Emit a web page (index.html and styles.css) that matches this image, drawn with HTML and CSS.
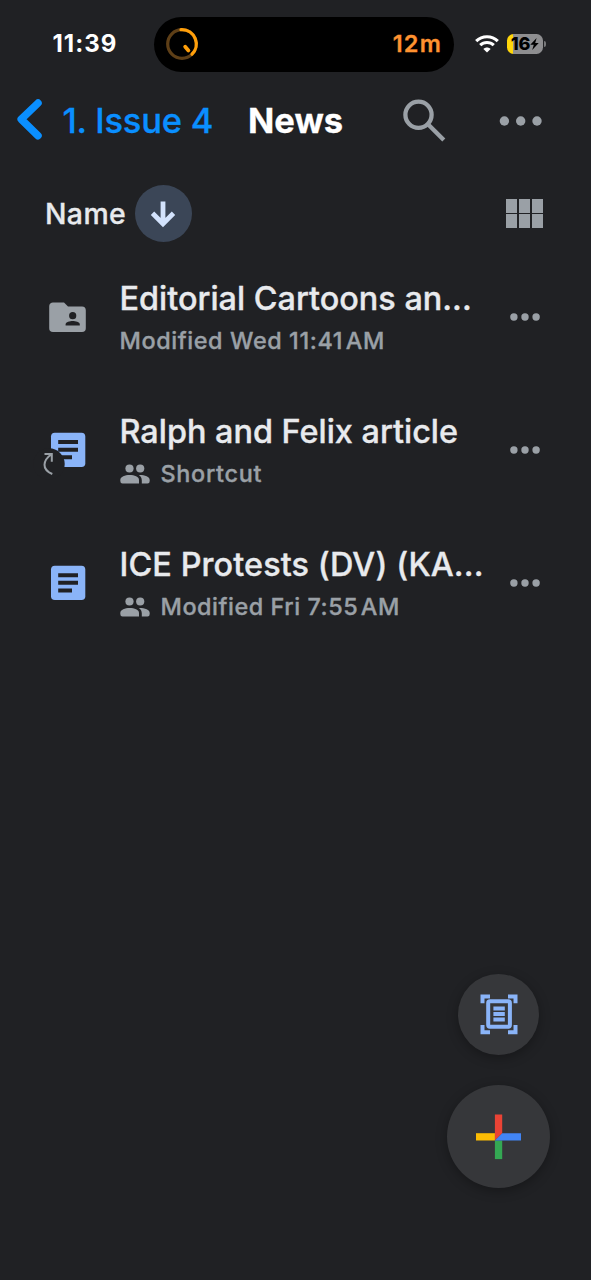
FILE: index.html
```html
<!DOCTYPE html>
<html lang="en">
<head>
<meta charset="utf-8">
<title>News</title>
<link rel="stylesheet" href="styles.css">
</head>
<body>
<svg width="0" height="0" class="defs">
  <symbol id="people" viewBox="0 0 30 20">
    <circle cx="9.5" cy="4.5" r="4.1"/><circle cx="20.2" cy="4.5" r="4.1"/>
    <path d="M0.300 16C0.300 12.500 5 11 9.700 11S19 12.500 19 16V19.500H2.500Q0.300 19.500 0.300 17Z"/>
    <path d="M19.500 11C25 11 29.700 12.500 29.700 16V17Q29.700 19.500 27.500 19.500H21.800V16.500C21.800 14 20.700 12.200 18.800 11Z"/>
  </symbol>
  <symbol id="more" viewBox="0 0 30 8">
    <circle cx="3.900" cy="4" r="3.700"/><circle cx="15" cy="4" r="3.700"/><circle cx="26.100" cy="4" r="3.700"/>
  </symbol>
</svg>
<div class="screen">
  <header class="status">
    <span class="clock">11:39</span>
    <div class="island">
      <svg class="timer" width="32" height="32" viewBox="0 0 32 32" fill="none" stroke-width="3.200">
        <circle cx="16" cy="16" r="14.300" stroke="#5e3f17"/>
        <path d="M15 1.700H16A14.300 14.300 0 0 1 26 26.200" stroke="#ff9f0a" stroke-linecap="round"/>
        <path d="M19.200 18.700L22.400 22.400" stroke="#ff9f0a" stroke-width="3.800" stroke-linecap="round"/>
      </svg>
      <span class="remaining">12m</span>
    </div>
    <svg class="wifi" width="24" height="18" viewBox="0 0 24 18" fill="none" stroke="#fff" stroke-width="3.100">
      <path d="M1.200 6.200C7.200 0.300 16.800 0.300 22.800 6.200"/>
      <path d="M5.200 10.200C9 6.500 15 6.500 18.800 10.200"/>
      <path d="M12 17.600L8.400 14C10.300 12 13.700 12 15.600 14Z" fill="#fff" stroke="none"/>
    </svg>
    <div class="battery"><span class="level">16</span><svg width="9" height="12" viewBox="0 0 9 12"><path d="M6.600 0L0.300 6.800H3.800L2.200 12L8.700 4.900H5.200Z"/></svg></div>
    <i class="cap"></i>
  </header>

  <nav class="nav">
    <svg class="chevron" width="26" height="42" viewBox="0 0 26 42" fill="none" stroke="#0a8fff" stroke-width="7.500" stroke-linecap="round" stroke-linejoin="round"><path d="M21 4.100L4.200 20.200L21 36.700"/></svg>
    <span class="back">1. Issue 4</span>
    <h1 class="heading">News</h1>
    <svg class="search" width="43" height="43" viewBox="0 0 43 43" fill="none" stroke="#9aa0a6" stroke-width="4.300"><circle cx="15.500" cy="15.800" r="13.100"/><path d="M25 25.300L40.800 41"/></svg>
    <svg class="menu" width="44" height="10" viewBox="0 0 44 10" fill="#9aa0a6"><circle cx="5.400" cy="5" r="4.700"/><circle cx="21.700" cy="5" r="4.700"/><circle cx="38" cy="5" r="4.700"/></svg>
  </nav>

  <div class="sort">
    <span class="sort-name">Name</span>
    <span class="sort-dir"><svg width="26" height="28" viewBox="0 0 26 28" fill="none" stroke="#d3e3fd" stroke-width="4.800"><path d="M13 1.500V23.500M2.500 13.300L13 23.800L23.500 13.300"/></svg></span>
    <div class="grid"><i></i><i></i><i></i><i></i><i></i><i></i></div>
  </div>

  <main>
    <article class="row">
      <svg class="file" width="44" height="44" viewBox="0 0 44 44"><path d="M9.200 7.500H20L24 11.500H38A3.800 3.800 0 0 1 41.800 15.300V33.200A3.800 3.800 0 0 1 38 37H9A3.800 3.800 0 0 1 5.200 33.200V11.500A3.800 3.800 0 0 1 9.200 7.500Z" fill="#9aa0a6"/><circle cx="28.700" cy="20.700" r="3.600" fill="#202124"/><path d="M21.600 30.500V29.500C21.600 27 26 26.100 28.700 26.100S35.800 27 35.800 29.500V30.500Z" fill="#202124"/></svg>
      <div class="text">
        <div class="title t1">Editorial Cartoons an...</div>
        <div class="sub s1">Modified Wed 11:41&#8202;AM</div>
      </div>
      <svg class="more"><use href="#more"/></svg>
    </article>
    <article class="row">
      <svg class="file" width="44" height="44" viewBox="0 0 44 44"><rect x="7" y="4.700" width="34.300" height="34.300" rx="3.800" fill="#8ab4f8"/><path d="M14.200 14H34M14.200 21.700H34M14.200 29.300H28" stroke="#202124" stroke-width="4"/><circle cx="5" cy="36" r="15.700" fill="#202124"/><path d="M0.500 26H7.800V33.800M7.800 26C-1.500 32.500-2.500 41.500 8.300 46" fill="none" stroke="#9aa0a6" stroke-width="2"/></svg>
      <div class="text">
        <div class="title t2">Ralph and Felix article</div>
        <div class="sub s2"><svg class="people"><use href="#people"/></svg>Shortcut</div>
      </div>
      <svg class="more"><use href="#more"/></svg>
    </article>
    <article class="row">
      <svg class="file" width="44" height="44" viewBox="0 0 44 44"><rect x="7" y="4.700" width="34.300" height="34.300" rx="3.800" fill="#8ab4f8"/><path d="M14.200 14.200H34M14.200 21.800H34M14.200 29.400H28" stroke="#202124" stroke-width="4"/></svg>
      <div class="text">
        <div class="title t3">ICE Protests (DV) (KA...</div>
        <div class="sub s3"><svg class="people"><use href="#people"/></svg>Modified Fri 7:55&#8202;AM</div>
      </div>
      <svg class="more"><use href="#more"/></svg>
    </article>
  </main>

  <div class="fabs">
    <div class="fab scan">
      <svg width="38" height="42" viewBox="0 0 38 42" fill="none" stroke="#8ab4f8"><path d="M2.500 9.200V2.400H10M28 2.400H35.500V9.200M2.500 31V38.200H10M28 38.200H35.500V31" stroke-width="4"/><rect x="8.200" y="7.300" width="21.700" height="25.500" rx="1.700" stroke-width="4"/><path d="M13.400 14.500H24.800M13.400 20H24.800M13.400 25.500H24.800" stroke-width="4"/></svg>
    </div>
    <div class="fab add">
      <svg width="45" height="45" viewBox="0 0 45 45"><path d="M18.900 0.500H26.200V19.200L18.900 26.500Z" fill="#ea4335"/><path d="M0 19.200H18.900V26.500H0Z" fill="#fbbc04"/><path d="M18.900 26.500H26.200V45.100H18.900Z" fill="#34a853"/><path d="M26.200 19.200H45V26.500H18.900Z" fill="#4285f4"/></svg>
    </div>
  </div>
</div>
</body>
</html>
```

FILE: styles.css
```css
* { box-sizing: border-box; }
body { margin: 0; background: #202124; font-family: Inter, "Liberation Sans", sans-serif; }
svg { display: block; flex: none; overflow: visible; }
.defs { position: absolute; }
.screen { position: relative; width: 591px; height: 1280px; overflow: hidden; background: #202124; white-space: nowrap; }

.status { display: flex; align-items: center; height: 88px; padding-left: 52.500px; color: #fff; }
.clock { width: 101px; font-size: 24px; font-weight: 700; line-height: 28px; letter-spacing: 1px; }
.island { display: flex; align-items: center; justify-content: space-between; width: 300.500px; height: 55px; padding: 0 12px 0 12.500px; border-radius: 28px; background: #000; }
.remaining { color: #ff9230; font-size: 23.5px; font-weight: 600; line-height: 28px; letter-spacing: 1.200px; -webkit-text-stroke: 0.300px; }
.wifi { margin-left: 20.500px; }
.battery { display: flex; align-items: center; justify-content: center; width: 36px; height: 20px; margin-left: 8.500px; border-radius: 6.500px; background: linear-gradient(90deg, #ffd60a 6.500px, #8e8e90 6.500px); color: #000; font-size: 18px; font-weight: 800; letter-spacing: -0.300px; line-height: 20px; }
.cap { width: 2px; height: 6px; margin-left: 1px; border-radius: 0 2px 2px 0; background: #77787a; }

.nav { display: flex; align-items: center; height: 65px; padding-left: 17px; }
.back { width: 186px; padding-left: 19.500px; color: #0a8fff; font-size: 34.500px; font-weight: 500; line-height: 42px; letter-spacing: -0.250px; -webkit-text-stroke: 0.300px; }
.heading { width: 174px; margin: 0; padding-left: 19px; color: #fff; font-size: 34.500px; font-weight: 700; line-height: 42px; -webkit-text-stroke: 0.300px; }
.menu { margin-left: 53px; margin-top: 1px; }
.chevron, .search { margin-top: -1px; }

.sort { display: flex; align-items: center; height: 57px; margin-top: 32px; padding: 0 48px 0 45px; }
.sort-name { width: 89.500px; color: #e8eaed; font-size: 28.400px; font-weight: 500; line-height: 36px; letter-spacing: 0.400px; -webkit-text-stroke: 0.300px; }
.sort-dir { display: flex; align-items: center; justify-content: center; width: 57px; height: 57px; border-radius: 50%; background: #3b4657; }
.grid { display: grid; grid-template-columns: repeat(3, 11px); grid-auto-rows: 13.500px; gap: 1.500px 2px; margin-left: auto; }
.grid i { background: #9aa0a6; }

main { margin-top: 9px; }
.row { display: flex; align-items: center; height: 132.850px; padding: 0 51.500px 0 44px; }
.text { width: 389px; padding: 0 0 1px 31.500px; }
.title { color: #e8eaed; font-size: 32.400px; font-weight: 500; line-height: 40px; -webkit-text-stroke: 0.350px; }
.t3 { letter-spacing: 0.100px; }
.sub { display: flex; align-items: center; margin-top: 8px; color: #9aa0a6; font-size: 23.400px; font-weight: 500; line-height: 28px; letter-spacing: 0.550px; -webkit-text-stroke: 0.350px; }
.s1 { letter-spacing: 0.600px; }
.s2 { letter-spacing: 0.700px; }
.people { width: 30px; height: 20px; margin-right: 11px; fill: #9aa0a6; }
.more { width: 30px; height: 8px; margin-left: auto; fill: #9aa0a6; }

.fabs { position: absolute; right: 41px; bottom: 92px; display: flex; flex-direction: column; align-items: center; gap: 30px; }
.fab { display: flex; align-items: center; justify-content: center; border-radius: 50%; background: #36373a; box-shadow: 0 3px 12px rgba(0, 0, 0, 0.300); }
.scan { width: 81px; height: 81px; }
.add { width: 103px; height: 103px; }
```
